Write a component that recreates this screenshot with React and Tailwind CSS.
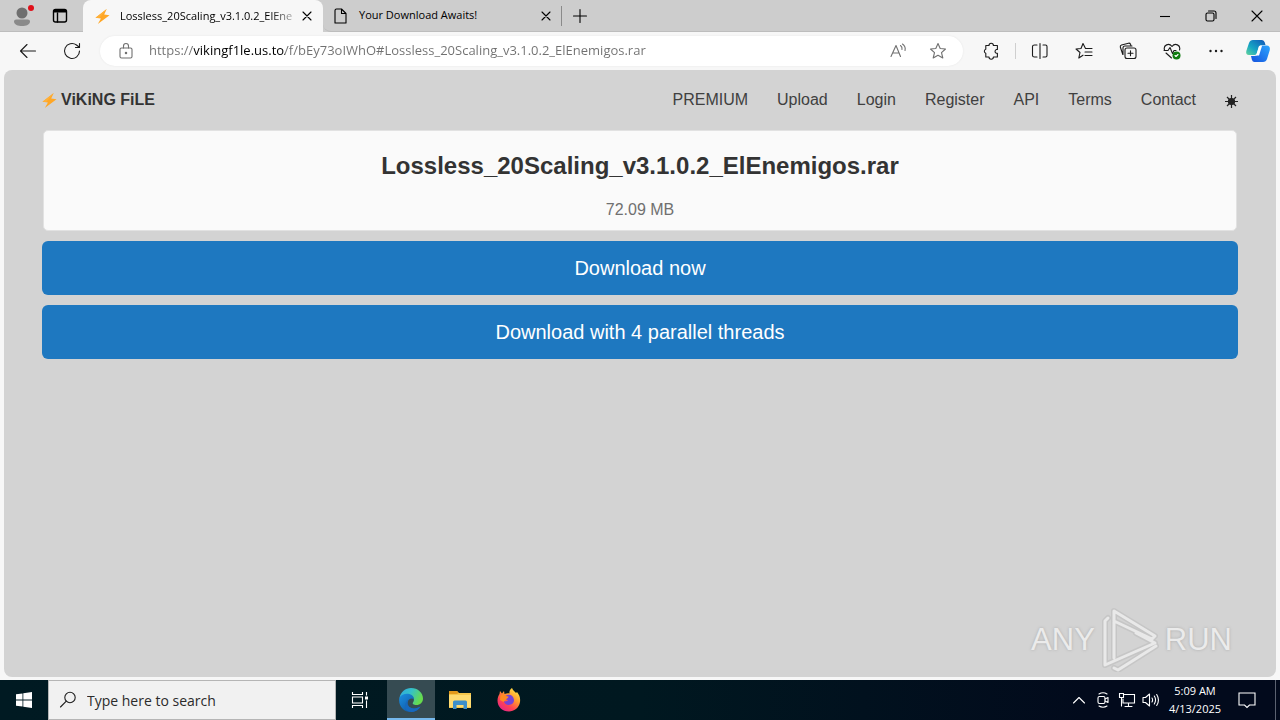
import React, { useState } from 'react'

const Svg = ({ size = 18, children, className = "", width = 1.1 }) => (
    <svg
        width={size}
        height={size}
        viewBox="0 0 18 18"
        fill="none"
        stroke="currentColor"
        strokeWidth={width}
        strokeLinecap="round"
        strokeLinejoin="round"
        className={`shrink-0 ${className}`}
        aria-hidden="true"
    >
        {children}
    </svg>
)

const Bolt = ({ size }) => (
    <svg width={size} height={size} viewBox="0 0 16 16" className="shrink-0" aria-hidden="true">
        <path d="M12.500 0 .5 9.200l5.800.8L3 16 15.500 6.700l-5.700-.8z" fill="#ffa726" />
        <path d="M12.500 0 .5 9.200l4 .5z" fill="#ffb13b" />
    </svg>
)

const CloseIcon = () => (
    <Svg>
        <path d="m5 5 8 8M13 5l-8 8" />
    </Svg>
)

const TitleBar = () => {
    return (
        <div className="flex h-8 items-stretch bg-[#cdcdcd] text-black">
            <div className="flex w-[83px] shrink-0 items-center justify-between border-b border-[#bdbdbd] pl-3 pr-[14px]">
                <button className="relative" aria-label="Profile">
                    <svg width="20" height="22" viewBox="0 0 20 22" aria-hidden="true">
                        <circle cx="10" cy="8" r="5.500" fill="#6f6f6f" />
                        <path d="M2 16.500c0-1.200 1-2 2.200-2h11.600c1.200 0 2.200.8 2.200 2 0 3.200-4 4.500-8 4.500s-8-1.300-8-4.500z" fill="#8a8a8a" />
                    </svg>
                    <span className="absolute -right-0.5 top-0 size-[6px] rounded-full bg-[#e0101a]" />
                </button>
                <button aria-label="Workspaces">
                    <Svg width={1.4}>
                        <rect x="2.500" y="2.500" width="13" height="12.500" rx="2" />
                        <path d="M3 4.200h12" strokeWidth="2.600" strokeLinecap="butt" />
                        <path d="M6.500 6v9" />
                    </Svg>
                </button>
            </div>
            <div className="flex w-60 shrink-0 items-center rounded-t-lg bg-[#f7f7f7] pl-3 pr-[7px]">
                <Bolt size={15} />
                <span className="ml-[10px] flex-1 whitespace-nowrap bg-[linear-gradient(to_right,#000_150px,#f7f7f7_182px)] bg-clip-text text-[11px] text-transparent">
                    Lossless_20Scaling_v3.1.0.2_ElEne
                </span>
                <button aria-label="Close tab">
                    <CloseIcon />
                </button>
            </div>
            <div className="flex flex-1 items-center rounded-bl-lg border-b border-[#bdbdbd]">
                <div className="flex h-full w-[238px] items-center pl-[9px] pr-[6px]">
                    <Svg>
                        <path d="M4.500 2h5l4.500 4.500V16H3V3.500Q3 2 4.500 2zM9.500 2v4.500H14" />
                    </Svg>
                    <span className="ml-[9px] flex-1 whitespace-nowrap text-[11px]">Your Download Awaits!</span>
                    <button aria-label="Close tab">
                        <CloseIcon />
                    </button>
                </div>
                <span className="h-5 w-px bg-[#8a8a8a]" />
                <button className="ml-[9px]" aria-label="New tab">
                    <Svg>
                        <path d="M9 2.500v13M2.500 9h13" />
                    </Svg>
                </button>
            </div>
            <div className="flex border-b border-[#bdbdbd]">
                <button className="flex w-[46px] items-center justify-center" aria-label="Minimize">
                    <Svg>
                        <path d="M4 9.500h10" strokeLinecap="butt" />
                    </Svg>
                </button>
                <button className="flex w-[46px] items-center justify-center" aria-label="Restore">
                    <Svg>
                        <rect x="4" y="6" width="8" height="8" rx="1.500" />
                        <path d="M6.500 4H12q2 0 2 2v5.500" />
                    </Svg>
                </button>
                <button className="flex w-[46px] items-center justify-center" aria-label="Close">
                    <Svg>
                        <path d="m4 4 10 10M14 4 4 14" />
                    </Svg>
                </button>
            </div>
        </div>
    )
}

const ToolButton = ({ label, children }) => (
    <button className="flex h-8 w-11 shrink-0 items-center justify-center" aria-label={label}>
        {children}
    </button>
)

const Toolbar = () => {
    const [url, setUrl] = useState("https://vikingf1le.us.to/f/bEy73oIWhO#Lossless_20Scaling_v3.1.0.2_ElEnemigos.rar")

    return (
        <div className="flex h-[38px] items-center bg-[#f7f7f7] pl-[6px] text-[#1b1b1b]">
            <ToolButton label="Back">
                <Svg>
                    <path d="M16.500 9H1.500M8 2.500 1.500 9 8 15.500" />
                </Svg>
            </ToolButton>
            <ToolButton label="Refresh">
                <Svg>
                    <path d="M16.500 9A7.500 7.500 0 1 1 13.500 3l2.500 2M16.500 1.500V5.500h-4" />
                </Svg>
            </ToolButton>
            <div className="ml-[6px] flex h-[30px] flex-1 items-center rounded-full bg-white pl-[17px] pr-4 text-[#707070] shadow-[0_0_2px_#e4e4e4]">
                <Svg>
                    <rect x="3" y="6" width="12" height="10" rx="1.500" />
                    <path d="M6.500 6V4a2.500 2.500 0 0 1 5 0v2" />
                    <circle cx="9" cy="11" r=".7" fill="currentColor" />
                </Svg>
                <input
                    type="text"
                    aria-label="Address"
                    className="ml-[14px] min-w-0 flex-1 bg-[linear-gradient(to_right,#707070_45px,#000_45px_136px,#707070_136px)] bg-clip-text text-[13px] text-transparent outline-none"
                    value={url}
                    onChange={(e) => setUrl(e.target.value)}
                />
                <button aria-label="Read aloud">
                    <Svg>
                        <path d="m2 14.500 5-11 4.500 11M4 11h6M11.500 3.500q2 1.500 1.500 4M13.500 2q3.500 2.500 2.500 6.500" />
                    </Svg>
                </button>
                <button className="ml-[22px]" aria-label="Favorite this page">
                    <Svg>
                        <path d="m9 1.500 2.200 5 5.300.5-4 3.700 1.300 5.300L9 13.300 4.200 16l1.300-5.300L1.500 7l5.300-.5z" />
                    </Svg>
                </button>
            </div>
            <div className="ml-[6px] flex items-center">
                <ToolButton label="Extensions">
                    <Svg>
                        <path d="M3.800 3.500H7a2.200 2.200 0 0 1 4.400 0h4v4h-1a2 2 0 0 0 0 3.800h1v3.700h-4a2.200 2.200 0 0 1-4.400 0H3.800v-3.700a2.100 2.100 0 0 1 0-4z" />
                    </Svg>
                </ToolButton>
                <span className="mx-[2px] h-4 w-px bg-[#cfcfcf]" />
                <ToolButton label="Split screen">
                    <Svg>
                        <path d="M6 3H3.500Q1.500 3 1.500 4.500v9Q1.500 15 3.500 15H6M12 3h2.500q1.500 0 1.500 1.500v9q0 1.500-1.500 1.500H12M9 1.500v15" />
                    </Svg>
                </ToolButton>
                <ToolButton label="Favorites">
                    <Svg>
                        <path d="M10.500 6.500 8 1.500l-2 5-5 .5 4 3.500L3.800 16l4.200-2.800M10.500 6.500H17M10 10h7M10 13.500h7" />
                    </Svg>
                </ToolButton>
                <ToolButton label="Collections">
                    <Svg>
                        <rect x="6" y="6" width="11" height="10.500" rx="2" />
                        <path d="M3.800 12.500 1.300 5Q1 3.500 2.500 3l7-1.800Q11 1 11.500 2.200l.4 1.200M4 12.500V6q0-2 2-2h7M11.500 8.800v5M9 11.300h5" />
                    </Svg>
                </ToolButton>
                <ToolButton label="Browser essentials">
                    <Svg>
                        <path d="M1.500 8C0 3 6 .5 9 4.500 12 .5 18 3 16.500 8M1 8.500h4L7 5.500l2.500 6 1.500-3h2M3 11l5.500 5" />
                        <circle cx="13.500" cy="13.500" r="4" fill="#107c10" stroke="none" />
                        <path d="m12 13.500 1 1 2-2" stroke="#fff" />
                    </Svg>
                </ToolButton>
                <ToolButton label="Settings and more">
                    <Svg>
                        <g fill="#1b1b1b" stroke="none">
                            <circle cx="3.500" cy="9" r="1.200" />
                            <circle cx="9" cy="9" r="1.200" />
                            <circle cx="14.500" cy="9" r="1.200" />
                        </g>
                    </Svg>
                </ToolButton>
                <button className="flex w-[42px] justify-center pr-0.5" aria-label="Copilot">
                    <svg width="26" height="26" viewBox="0 0 26 26" aria-hidden="true">
                        <defs>
                            <linearGradient id="copilotA" x1="0" y1="1" x2="1" y2="0">
                                <stop offset="0" stopColor="#63d59b" />
                                <stop offset=".4" stopColor="#16a5c4" />
                                <stop offset="1" stopColor="#1155b8" />
                            </linearGradient>
                            <linearGradient id="copilotB" x1="0" y1="1" x2="1" y2="0">
                                <stop offset="0" stopColor="#1552dd" />
                                <stop offset="1" stopColor="#2ba5ff" />
                            </linearGradient>
                        </defs>
                        <path d="M8 2h9q2 0 2.800 2.500l.7 2.500h-4q-2 0-2.600 2l-1.800 6q-.7 2-2.600 2H4Q.5 17 1.300 13L4 5q1-3 4-3z" fill="url(#copilotA)" />
                        <path d="M18 24H9.500q-2 0-2.600-2.200L6 18h4q2 0 2.600-2l1.900-6q.6-2.500 2.500-2.500h4.500Q25.500 7.500 24.800 12L22 21q-1 3-4 3z" fill="url(#copilotB)" />
                        <path d="m11 17.500 3-9.500h3L14 17.500z" fill="#fff" />
                    </svg>
                </button>
            </div>
        </div>
    )
}

const links = ["PREMIUM", "Upload", "Login", "Register", "API", "Terms", "Contact"]

const Page = () => {
    return (
        <main className="relative flex-1 rounded-lg bg-[#d3d3d3] px-[38px] pb-28 font-['Liberation_Sans',Arial,sans-serif] text-[16px] text-[#333]">
            <header className="flex h-[60px] items-center justify-between">
                <a href="#home" className="flex items-center gap-1 font-bold">
                    <Bolt size={15} />
                    ViKiNG FiLE
                </a>
                <nav className="flex items-center gap-[29px] text-[#404040]">
                    {links.map((link) => (
                        <a key={link} href={`#${link.toLowerCase()}`}>{link}</a>
                    ))}
                    <button className="pt-0.5" aria-label="Toggle theme">
                        <svg width="13" height="13" viewBox="0 0 13 13" stroke="#222" strokeWidth="1.200" aria-hidden="true">
                            <circle cx="6.500" cy="6.500" r="3" fill="#222" />
                            <path d="M6.500 0v13M0 6.500h13M2 2l9 9M11 2l-9 9" />
                        </svg>
                    </button>
                </nav>
            </header>
            <section className="mx-px flex flex-col items-center rounded-[5px] border border-[#e2e2e2] bg-[#fafafa] pb-2 pt-[19px] text-center">
                <h1 className="text-[24px] font-bold leading-8">Lossless_20Scaling_v3.1.0.2_ElEnemigos.rar</h1>
                <p className="mt-4 leading-6 text-[#707070]">72.09 MB</p>
            </section>
            <div className="mt-[10px] flex flex-col gap-[10px] text-[20px] text-white">
                <button className="h-[54px] w-full rounded-md bg-[#1e78c0]">Download now</button>
                <button className="h-[54px] w-full rounded-md bg-[#1e78c0]">Download with 4 parallel threads</button>
            </div>
            <div className="absolute bottom-[5px] right-[44px] flex items-center gap-[6px] text-[31px] text-[#ebebeb] [text-shadow:0_0_3px_#aaa]">
                <span>ANY</span>
                <svg width="58" height="64" viewBox="0 0 58 64" fill="none" strokeLinejoin="round" strokeLinecap="round" aria-hidden="true">
                    <g stroke="#c6c6c6" strokeWidth="6">
                        <path d="M13 50V3l41 25-3 3-38-18M7 10 4 13v44L54 35 35 25M13 60l4 2 38-24" />
                    </g>
                    <g stroke="#e9e9e9" strokeWidth="3">
                        <path d="M13 50V3l41 25-3 3-38-18M7 10 4 13v44L54 35 35 25M13 60l4 2 38-24" />
                    </g>
                </svg>
                <span>RUN</span>
            </div>
        </main>
    )
}

const Taskbar = () => {
    const [search, setSearch] = useState("")

    return (
        <footer className="flex h-10 items-stretch bg-[linear-gradient(to_right,#001a22,#001820_50%,#020a1c_85%)] text-white">
            <button className="flex w-12 shrink-0 items-center justify-center" aria-label="Start">
                <svg width="16" height="16" viewBox="0 0 16 16" fill="#fff" aria-hidden="true">
                    <path d="M0 2.300 6.500 1.400v6.200H0zM7.300 1.200 16 0v7.600H7.300zM0 8.400h6.500v6.200L0 13.700zM7.300 8.400H16V16l-8.700-1.200z" />
                </svg>
            </button>
            <div className="flex w-72 shrink-0 items-center border border-[#b5b5b5] bg-[#f1f1f1] pl-[10px] text-[#1f1f1f]">
                <Svg>
                    <circle cx="11" cy="6.500" r="5.200" />
                    <path d="M7.300 10.200 1.500 16" />
                </Svg>
                <input
                    type="text"
                    aria-label="Search"
                    className="ml-[10px] min-w-0 flex-1 bg-transparent text-[14px] outline-none placeholder:text-[#2b2b2b] placeholder:opacity-100"
                    placeholder="Type here to search"
                    value={search}
                    onChange={(e) => setSearch(e.target.value)}
                />
            </div>
            <div className="flex flex-1 gap-px">
                <button className="mr-[2px] flex w-12 items-center justify-center" aria-label="Task view">
                    <Svg>
                        <path d="M1.500 1v2.500h10V1M1.500 17v-2.500h10V17M1.500 6h10v6h-10zM15.500 1v3.500M15.500 9.500V17" strokeLinecap="butt" strokeLinejoin="miter" />
                        <path d="M14 5.500h3v3h-3z" fill="#fff" stroke="none" />
                    </Svg>
                </button>
                <button className="flex w-12 items-center justify-center border-b-2 border-[#76b9ed] bg-[#364b52] pt-[2px]" aria-label="Microsoft Edge">
                    <svg width="24" height="24" viewBox="0 0 24 24" aria-hidden="true">
                        <defs>
                            <linearGradient id="edgeTop" x1="0" y1="0" x2="1" y2=".4">
                                <stop offset="0" stopColor="#2fa8e0" />
                                <stop offset=".5" stopColor="#35c1c9" />
                                <stop offset="1" stopColor="#66db4d" />
                            </linearGradient>
                            <linearGradient id="edgeLow" x1="0" y1="0" x2="1" y2="1">
                                <stop offset="0" stopColor="#1b8fe0" />
                                <stop offset="1" stopColor="#0c4a96" />
                            </linearGradient>
                        </defs>
                        <path d="M.5 10C1.500 4 6.500 0 12 0c7 0 12 5 12 10.500 0 4-3 6.500-6.500 6.500-3 0-4.500-1.200-3.500-2.500C16.500 11 14 7.500 9.500 7.500 5.500 7.500 2 8 .5 10z" fill="url(#edgeTop)" />
                        <path d="M.3 10C2 6.500 6 5.500 9 5.800c4 .4 6 3 6 5.700-2-2-6-.5-6.500 3-.5 4.500 5 7.500 10 5.200l3-1.200C19.500 22 16 24 12 24 5 24-1 18 .3 10z" fill="url(#edgeLow)" />
                        <path d="M8.500 14.500c-.5 4.500 5 7.500 10 5.200l3-1.200C19 23 14 24.500 10.500 23.800 4 22 5 13 11 10.200c-1.500.8-2.300 2.500-2.500 4.300z" fill="#1768bd" />
                    </svg>
                </button>
                <button className="flex w-12 items-center justify-center" aria-label="File Explorer">
                    <svg width="22" height="20" viewBox="0 0 22 20" aria-hidden="true">
                        <path d="M0 1h8l2 2h12v15H0z" fill="#f5c64b" />
                        <path d="M0 1h8l1.500 2L8 4H0z" fill="#e39a1b" />
                        <path d="M0 5h22v12H0z" fill="#ffdb70" />
                        <path d="M4 19v-7q0-1.500 1.500-1.500h11Q18 10.500 18 12v7h-3.500v-4h-7v4z" fill="#3d8fc9" />
                    </svg>
                </button>
                <button className="flex w-12 items-center justify-center" aria-label="Firefox">
                    <svg width="24" height="24" viewBox="0 0 24 24" aria-hidden="true">
                        <defs>
                            <linearGradient id="fox" x1=".9" y1="0" x2=".2" y2="1">
                                <stop offset="0" stopColor="#fff14a" />
                                <stop offset=".4" stopColor="#ff9a2e" />
                                <stop offset=".7" stopColor="#ff4253" />
                                <stop offset="1" stopColor="#e3228c" />
                            </linearGradient>
                        </defs>
                        <path d="M15 0c1 3 3 3.500 4 5l1-1c2.500 3 3.500 6 3 10-1 6-6 9.500-11 9.500C5.500 23.500.5 19 .5 12.500c0-3 1-5 2-6.500l.5-3 2 2.500L7 3l.5 3c2-.8 4-.8 5-.5C12 3 13.500 1 15 0z" fill="url(#fox)" />
                        <path d="M8 8.500c3-3 8.500-2 9 3.500.2 3-2.500 5-5.200 5C9 17 7 15 7 13c1 .8 3 .5 4-.7L8.500 11z" fill="#7543d6" />
                        <path d="M3.500 7.500c2-1.500 4-1 5 .5l3 .5c0 1.500-2 2-2.500 3L6.500 14 3 12z" fill="#ff8c22" />
                    </svg>
                </button>
            </div>
            <div className="flex items-center">
                <button className="flex w-6 justify-center" aria-label="Show hidden icons">
                    <Svg>
                        <path d="m3.500 12 5.500-5.500 5.500 5.500" />
                    </Svg>
                </button>
                <button className="flex w-6 justify-center" aria-label="Meet now">
                    <Svg>
                        <rect x="4" y="5.500" width="7" height="7" rx="1.500" />
                        <path d="m11 8 3-1.500v5L11 10M5 3q4-2.500 8 0M5 15q4 2.500 8 0" />
                    </Svg>
                </button>
                <button className="flex w-6 justify-center" aria-label="Network">
                    <Svg>
                        <path d="M6.500 3.500h10v8.500H5V8M10.500 12v3.500M7 15.500h7M1.500 2.500h4v4h-4zM3.500 6.500V15" strokeLinejoin="miter" />
                    </Svg>
                </button>
                <button className="flex w-6 justify-center" aria-label="Volume">
                    <Svg>
                        <path d="M1 6.500h2.500L7.500 3v12l-4-3.500H1zM10 7q1.200 2 0 4M12.300 5q2.500 4 0 8M14.700 3.500q3.500 5.500 0 11" />
                    </Svg>
                </button>
                <button className="w-16 text-center text-[11px] leading-[18px]">
                    <span className="block">5:09 AM</span>
                    <span className="block">4/13/2025</span>
                </button>
                <button className="flex w-10 justify-center" aria-label="Notifications">
                    <Svg>
                        <path d="M1 2h16v12h-5.500L9 16.500 6.500 14H1z" strokeLinejoin="miter" />
                    </Svg>
                </button>
                <button className="ml-2 h-full w-[5px] border-l border-[#5b6270]" aria-label="Show desktop" />
            </div>
        </footer>
    )
}

const App = () => {
    return (
        <div className="flex min-h-screen flex-col bg-[#f7f7f7] font-['Open_Sans','Noto_Sans',sans-serif]">
            <TitleBar />
            <Toolbar />
            <div className="flex flex-1 flex-col px-1 pb-[3px]">
                <Page />
            </div>
            <Taskbar />
        </div>
    )
}

export default App
